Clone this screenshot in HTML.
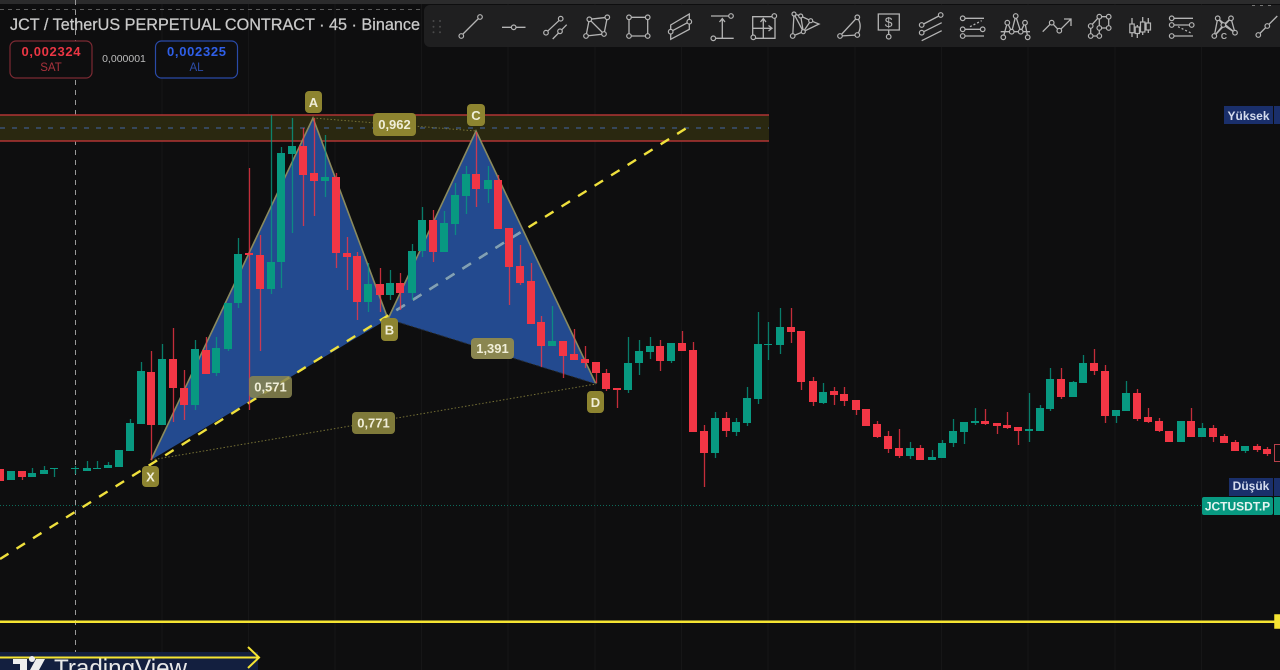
<!DOCTYPE html>
<html><head><meta charset="utf-8"><style>html,body{margin:0;padding:0;background:#0e0e0f;overflow:hidden}svg{display:block;filter:blur(.35px)}text{font-family:"Liberation Sans",sans-serif}</style></head><body>
<svg width="1280" height="670" viewBox="0 0 1280 670" xmlns="http://www.w3.org/2000/svg">
<defs><clipPath id="t2"><path d="M388 319L476 131L596 384Z"/></clipPath></defs>
<rect width="1280" height="670" fill="#0e0e0f"/>
<path d="M162 0V670M248.500 0V670M335 0V670M421.500 0V670M508 0V670M595 0V670M681.500 0V670M768 0V670M855 0V670M941.500 0V670M1028 0V670M1115 0V670M1201.500 0V670" stroke="#161617" stroke-width="1"/>
<rect width="1280" height="4" fill="#2b2b2c"/>
<path d="M0 9.500H424" stroke="#5c5c5c" stroke-dasharray="4 4"/>
<path d="M75.500 0V670" stroke="#9a9a9a" stroke-dasharray="5 5"/>
<rect x="0" y="115" width="769" height="26" fill="#2a2810"/>
<path d="M0 128H769" stroke="#3d5a88" stroke-dasharray="5 7" stroke-width="1.200"/>
<path d="M0 115H769M0 141H769" stroke="#b03434" stroke-width="1.600"/>
<path d="M0 505.500H1202" stroke="#0d6b5a" stroke-dasharray="1 2"/>
<path d="M151 460L313 118L388 319ZM388 319L476 131L596 384Z" fill="#234a8f"/>
<path d="M151 460L313 118L388 319L476 131L596 384" fill="none" stroke="#8a8a5e" stroke-width="1.600"/>
<path d="M151 460L596 384M313 118L476 131" stroke="#757035" stroke-dasharray="1.500 2" fill="none"/>
<path d="M388 319L596 384" stroke="#2a2e30" stroke-dasharray="2 2"/>
<path d="M0 559L693 124" stroke="#efe03c" stroke-width="2.400" stroke-dasharray="10 9.500"/>
<path d="M0 559L693 124" stroke="#7f9fba" stroke-width="2.400" stroke-dasharray="10 9.500" clip-path="url(#t2)"/>
<path stroke="#089981" stroke-width="1.300" fill="none" opacity=".8" d="M32.500 468V477M44.500 466V474M54.500 468V477M75.500 466V474M87.500 461V471M97.500 461V469M108.500 462V468M130.500 419V451M141.500 362V424M162.500 344V425M195.500 340V410M216.500 337V376M228.500 303V351M238.500 238V308M271.500 115V294M281.500 147V288M292.500 118V233M325.500 135V197M368.500 263V312M390.500 270V300M412.500 244V300M422.500 207V257M444.500 211V252M455.500 183V235M466.500 166V214M488.500 166V203M552.500 306V346M628.500 337V393M639.500 340V375M650.500 337V359M671.500 343V363M715.500 412V458M736.500 418V436M747.500 387V426M758.500 312V404M768.500 322V360M780.500 308V354M823.500 383V404M910.500 442V459M932.500 450V460M942.500 440V458M953.500 419V447M964.500 422V444M975.500 408V425M1029.500 393V442M1040.500 405V431M1050.500 368V411M1073.500 381V397M1083.500 355V383M1116.500 410V423M1126.500 381V411M1202.500 423V437M1245.500 446V453"/>
<path stroke="#f23645" stroke-width="1.300" fill="none" opacity=".8" d="M22.500 471V480M151.500 351V460M173.500 328V422M184.500 370V420M206.500 337V374M249.500 168V410M260.500 235V351M303.500 128V226M314.500 118V216M336.500 173V268M347.500 237V290M357.500 252V320M380.500 268V312M400.500 273V310M433.500 210V262M476.500 132V207M498.500 175V229M509.500 228V305M520.500 245V285M531.500 263V324M541.500 316V367M563.500 341V378M574.500 329V360M585.500 346V368M596.500 362V383M606.500 369V391M617.500 388V408M660.500 340V371M682.500 331V351M693.500 342V432M704.500 425V487M726.500 412V437M791.500 308V343M801.500 331V390M813.500 377V406M834.500 387V405M844.500 387V406M856.500 400V415M877.500 421V438M888.500 431V453M899.500 429V458M920.500 445V460M985.500 409V425M997.500 423V434M1007.500 412V429M1018.500 427V445M1061.500 368V399M1094.500 349V375M1105.500 365V423M1137.500 389V421M1148.500 408V423M1159.500 418V432M1191.500 408V437M1213.500 425V442M1224.500 434V443M1235.500 440V451M1257.500 444V452M1267.500 447V456"/>
<path fill="#089981" d="M7 471h8V480h-8zM28 473h8V477h-8zM40 470h8V474h-8zM50 468h8V469h-8zM71 468h8V469h-8zM83 468h8V471h-8zM93 468h8V469h-8zM104 465h8V468h-8zM115 450h8V467h-8zM126 423h8V451h-8zM137 371h8V424h-8zM158 359h8V425h-8zM191 349h8V405h-8zM212 348h8V373h-8zM224 303h8V349h-8zM234 254h8V303h-8zM267 262h8V289h-8zM277 153h8V262h-8zM288 146h8V154h-8zM321 177h8V181h-8zM364 284h8V302h-8zM386 283h8V295h-8zM408 251h8V293h-8zM418 220h8V251h-8zM440 223h8V252h-8zM451 195h8V224h-8zM462 174h8V196h-8zM484 180h8V189h-8zM548 341h8V346h-8zM624 363h8V390h-8zM635 351h8V363h-8zM646 346h8V352h-8zM667 343h8V361h-8zM711 418h8V453h-8zM732 422h8V432h-8zM743 398h8V423h-8zM754 344h8V399h-8zM764 344h8V345h-8zM776 327h8V345h-8zM819 392h8V403h-8zM906 448h8V456h-8zM928 457h8V460h-8zM938 443h8V458h-8zM949 431h8V443h-8zM960 422h8V432h-8zM971 421h8V423h-8zM1025 429h8V431h-8zM1036 408h8V431h-8zM1046 379h8V409h-8zM1069 382h8V397h-8zM1079 363h8V383h-8zM1112 410h8V416h-8zM1122 393h8V411h-8zM1177 421h8V442h-8zM1198 428h8V437h-8zM1241 446h8V451h-8z"/>
<path fill="#f23645" d="M-4 469h8V481h-8zM18 471h8V477h-8zM147 372h8V425h-8zM169 359h8V388h-8zM180 388h8V405h-8zM202 350h8V374h-8zM245 253h8V255h-8zM256 255h8V289h-8zM299 146h8V175h-8zM310 173h8V181h-8zM332 177h8V253h-8zM343 253h8V257h-8zM353 256h8V302h-8zM376 284h8V295h-8zM396 283h8V293h-8zM429 220h8V252h-8zM472 174h8V189h-8zM494 180h8V229h-8zM505 228h8V267h-8zM516 266h8V283h-8zM527 281h8V324h-8zM537 322h8V346h-8zM559 341h8V356h-8zM570 354h8V360h-8zM581 359h8V363h-8zM592 362h8V373h-8zM602 373h8V389h-8zM613 388h8V390h-8zM656 346h8V361h-8zM678 343h8V351h-8zM689 350h8V432h-8zM700 431h8V453h-8zM722 418h8V431h-8zM787 327h8V332h-8zM797 331h8V382h-8zM809 381h8V402h-8zM830 391h8V395h-8zM840 394h8V401h-8zM852 400h8V410h-8zM862 409h8V426h-8zM873 424h8V437h-8zM884 436h8V449h-8zM895 448h8V456h-8zM916 448h8V460h-8zM981 421h8V424h-8zM993 423h8V426h-8zM1003 425h8V428h-8zM1014 427h8V431h-8zM1057 379h8V397h-8zM1090 363h8V371h-8zM1101 371h8V416h-8zM1133 393h8V419h-8zM1144 417h8V422h-8zM1155 421h8V431h-8zM1165 431h8V442h-8zM1187 421h8V437h-8zM1209 428h8V437h-8zM1220 436h8V443h-8zM1231 442h8V451h-8zM1253 446h8V450h-8zM1263 449h8V454h-8z"/>
<rect x="1274.500" y="444.500" width="8" height="17" fill="none" stroke="#b8404a"/>
<g fill="#8d8430">
<rect x="305" y="91" width="17" height="22" rx="4"/><rect x="467" y="104" width="18" height="22" rx="4"/><rect x="381" y="318" width="17" height="23" rx="4"/><rect x="142" y="466" width="17" height="21" rx="4"/><rect x="587" y="391" width="17" height="22" rx="4"/><rect x="373" y="113" width="43" height="23" rx="4"/>
<rect x="352" y="412" width="43" height="22" rx="4" fill="#7f7a3a"/>
<rect x="249" y="376" width="43" height="22" rx="4" fill="#8a8650" opacity=".85"/>
<rect x="471" y="338" width="43" height="21" rx="4" fill="#8a8650"/>
</g>
<g fill="#f0eed8" font-size="13" text-anchor="middle" font-weight="bold">
<text x="313.500" y="107">A</text><text x="476" y="120">C</text><text x="389.500" y="334.500">B</text><text x="150.500" y="481.500">X</text><text x="595.500" y="407">D</text>
<text x="394.500" y="129">0,962</text><text x="270.500" y="391.500">0,571</text><text x="373.500" y="427.500">0,771</text><text x="492.500" y="353">1,391</text>
</g>
<text x="10" y="30" font-size="16.500" fill="#c9c9c9" stroke="#c9c9c9" stroke-width=".25" textLength="410" lengthAdjust="spacingAndGlyphs">JCT / TetherUS PERPETUAL CONTRACT · 45 · Binance</text>
<rect x="10" y="41" width="82" height="37" rx="6" fill="#0e0e0f" stroke="#7c2a33" stroke-width="1.200"/>
<text x="51" y="56" font-size="13" font-weight="bold" fill="#ea3644" text-anchor="middle" textLength="59" lengthAdjust="spacing">0,002324</text>
<text x="51" y="71" font-size="11.500" fill="#a8323c" text-anchor="middle">SAT</text>
<text x="124" y="62" font-size="10.500" fill="#bdbdbd" text-anchor="middle">0,000001</text>
<rect x="155.500" y="41" width="82" height="37" rx="6" fill="#0e0e0f" stroke="#2a4aa8" stroke-width="1.200"/>
<text x="196.500" y="56" font-size="13" font-weight="bold" fill="#2f5fe8" text-anchor="middle" textLength="59" lengthAdjust="spacing">0,002325</text>
<text x="196.500" y="71" font-size="11.500" fill="#2c4ca8" text-anchor="middle">AL</text>
<rect x="1224" y="106" width="49" height="18" fill="#1a2f6b"/><rect x="1274" y="106" width="6" height="18" fill="#1a2f6b"/>
<text x="1248.500" y="120" font-size="12" font-weight="bold" fill="#d5dcee" text-anchor="middle">Yüksek</text>
<rect x="1229" y="478" width="44" height="18" fill="#1a2f6b"/><rect x="1274" y="478" width="6" height="18" fill="#1a2f6b"/>
<text x="1251" y="490" font-size="12" font-weight="bold" fill="#d5dcee" text-anchor="middle">Düşük</text>
<rect x="1202" y="497" width="71" height="18" rx="2" fill="#089981"/><rect x="1274" y="497" width="6" height="18" fill="#089981"/>
<text x="1237.500" y="510.500" font-size="12" font-weight="bold" fill="#e4f4f0" text-anchor="middle">JCTUSDT.P</text>
<rect x="0" y="620.500" width="1280" height="2.500" fill="#f5e432"/>
<rect x="1275" y="615" width="7" height="13" fill="#f5e432" stroke="#f5e432" stroke-width="1.500"/>
<rect x="0" y="652" width="258" height="18" fill="#131f3f"/>
<path d="M0 657.500H258M248 647L259 657.500L248 668" fill="none" stroke="#f5e432" stroke-width="2"/>
<path d="M13 659h14v11h-7v-6h-7zM29 659a3 3 0 1 1 0 .1zM36 659h9l-6 11h-9z" fill="#eee"/>
<text x="54" y="676" font-size="24" fill="#e8e8e8" textLength="133" lengthAdjust="spacingAndGlyphs">TradingView</text>
<path d="M424 5H1280V47H430a6 6 0 0 1-6-6V11a6 6 0 0 1 6-6Z" fill="#1f1f20"/>
<path d="M1252 5.500H1272" stroke="#777" stroke-dasharray="3 5"/>
<g fill="#4a4a4a"><circle cx="433.500" cy="21" r="1"/><circle cx="440" cy="21" r="1"/><circle cx="433.500" cy="26.700" r="1"/><circle cx="440" cy="26.700" r="1"/><circle cx="433.500" cy="32.300" r="1"/><circle cx="440" cy="32.300" r="1"/></g>
<g fill="none" stroke="#b4b4b4" stroke-width="1.300">
<path d="M461 36L480 17M502 27.300H525.500M546 32.700L561 18.700M552.700 39L566.700 24.700M589.300 19.300L607.300 17.300L604 34L586 36ZM589.300 19.300L604 34M629 17.300H647.700V36H629ZM670.700 25L689.300 14V29.300L670.700 39.300ZM670.700 31.700L689.300 21.700M711 16H731M713.300 38.300H733.700M722.300 19V38M719.500 22L722.300 18.500L725 22M752.700 16.700H775V38.300H752.700ZM753 28.300H771M763.300 38V19M760.500 22L763.300 18.500L766 22M768.500 25.500L772 28.300L768.500 31"/>
<path d="M792.700 36L794 14L803.300 31.700L800.700 16L810.700 20.700L819 24L803.300 31.700L792.700 36M794 14L800.700 16M810.700 20.700L803.300 31.700M840 36L857.300 17.300Q863 26 857.300 35L840 36M878.300 14H899.300V30H878.300ZM888.700 30V34M921.700 25L940.700 15M921.700 32.700L941.700 22.700M921.700 40.700L941.700 30.700M962.700 18.300H984M962.700 29.300H982.700M962.700 36H984"/>
<path d="M970 26.700L981.700 20.700" stroke-dasharray="2 2"/>
<path d="M1000.700 31.700H1030M1003.300 37.300L1007.300 22.700L1011.700 31.700L1015.700 16L1020.700 31.700L1025 22.700L1027.700 37.300M1042.700 31.700L1051.700 22.700L1059.300 30.700L1070.700 19.300M1064 19H1071V26M1090.700 36V26L1099.300 16.700H1108.700V28H1099.300V36H1090.700M1099.300 16.700V28M1132 18V37M1137.300 25V38M1142.700 17V35M1148.300 18V33"/>
<path d="M1171.700 18.300H1193M1171.700 25H1191.700M1171.700 36H1193"/>
<path d="M1178 26.700L1191.700 33.300" stroke-dasharray="2 2"/>
<path d="M1214.300 36L1217.700 18.300L1223.300 25L1231 18.300L1235 32.700L1223.300 25L1214.300 36M1217.700 18.300L1235 32.700M1231 18.300L1214.300 36M1258.300 35L1277.300 16"/>
</g>
<g fill="#1f1f20" stroke="#b4b4b4" stroke-width="1.200">
<rect x="1129.800" y="24" width="4.400" height="8.700"/><rect x="1135.200" y="27" width="4.200" height="6.500"/><rect x="1140.500" y="22" width="4.400" height="10"/><rect x="1146.100" y="23" width="4.400" height="7"/>
<circle cx="461.300" cy="36" r="2.300"/><circle cx="480" cy="17" r="2.300"/><circle cx="513.700" cy="27.300" r="2.300"/><circle cx="560.700" cy="18.700" r="2.300"/><circle cx="546" cy="32.700" r="2.300"/><circle cx="560" cy="31.300" r="2.300"/><circle cx="589.300" cy="19.300" r="2.300"/><circle cx="607.300" cy="17.300" r="2.300"/><circle cx="604" cy="34" r="2.300"/><circle cx="586" cy="36" r="2.300"/><circle cx="629" cy="17.300" r="2.300"/><circle cx="647.700" cy="17.300" r="2.300"/><circle cx="647.700" cy="36" r="2.300"/><circle cx="629" cy="36" r="2.300"/><circle cx="670.700" cy="31.700" r="2.300"/><circle cx="689.300" cy="21.700" r="2.300"/><circle cx="731" cy="16" r="2.300"/><circle cx="713.300" cy="38.300" r="2.300"/><circle cx="774.300" cy="16" r="2.300"/><circle cx="753.300" cy="37.300" r="2.300"/><circle cx="792.700" cy="36" r="2.300"/><circle cx="794" cy="14" r="2"/><circle cx="803.300" cy="31.700" r="2"/><circle cx="800.700" cy="16" r="2"/><circle cx="810.700" cy="20.700" r="2"/><circle cx="840" cy="36" r="2.300"/><circle cx="857.300" cy="17.300" r="2.300"/><circle cx="857.300" cy="35" r="2.300"/><circle cx="888.700" cy="36.700" r="2.300"/><circle cx="921.700" cy="25" r="2.300"/><circle cx="940.700" cy="15" r="2.300"/><circle cx="921.700" cy="32.700" r="2.300"/><circle cx="962.700" cy="18.300" r="2.300"/><circle cx="962.700" cy="29.300" r="2.300"/><circle cx="982.700" cy="29.300" r="2.300"/><circle cx="962.700" cy="36" r="2.300"/><circle cx="1003.300" cy="37.300" r="2.300"/><circle cx="1007.300" cy="22.700" r="2.300"/><circle cx="1011.700" cy="31.700" r="2.300"/><circle cx="1015.700" cy="16" r="2.300"/><circle cx="1020.700" cy="31.700" r="2.300"/><circle cx="1025" cy="22.700" r="2.300"/><circle cx="1027.700" cy="37.300" r="2.300"/><circle cx="1051.700" cy="22.700" r="2.300"/><circle cx="1059.300" cy="30.700" r="2.300"/><circle cx="1099.300" cy="16.700" r="2.300"/><circle cx="1108.700" cy="16.700" r="2.300"/><circle cx="1108.700" cy="28" r="2.300"/><circle cx="1099.300" cy="28" r="2.300"/><circle cx="1090.700" cy="26" r="2.300"/><circle cx="1090.700" cy="36" r="2.300"/><circle cx="1099.300" cy="36" r="2.300"/><circle cx="1171.700" cy="18.300" r="2.300"/><circle cx="1171.700" cy="25" r="2.300"/><circle cx="1191.700" cy="25" r="2.300"/><circle cx="1171.700" cy="36" r="2.300"/><circle cx="1214.300" cy="36" r="2.300"/><circle cx="1217.700" cy="18.300" r="2.300"/><circle cx="1223.300" cy="25" r="2.300"/><circle cx="1231" cy="18.300" r="2.300"/><circle cx="1235" cy="32.700" r="2.300"/><circle cx="1258.300" cy="35" r="2.300"/><circle cx="1267.300" cy="26" r="2.300"/>
</g>
<text x="888.700" y="27" font-size="14" fill="#b4b4b4" text-anchor="middle">$</text>
<text x="1224" y="39" font-size="8.500" font-weight="bold" fill="#b4b4b4" text-anchor="middle">C</text>
</svg>
</body></html>
